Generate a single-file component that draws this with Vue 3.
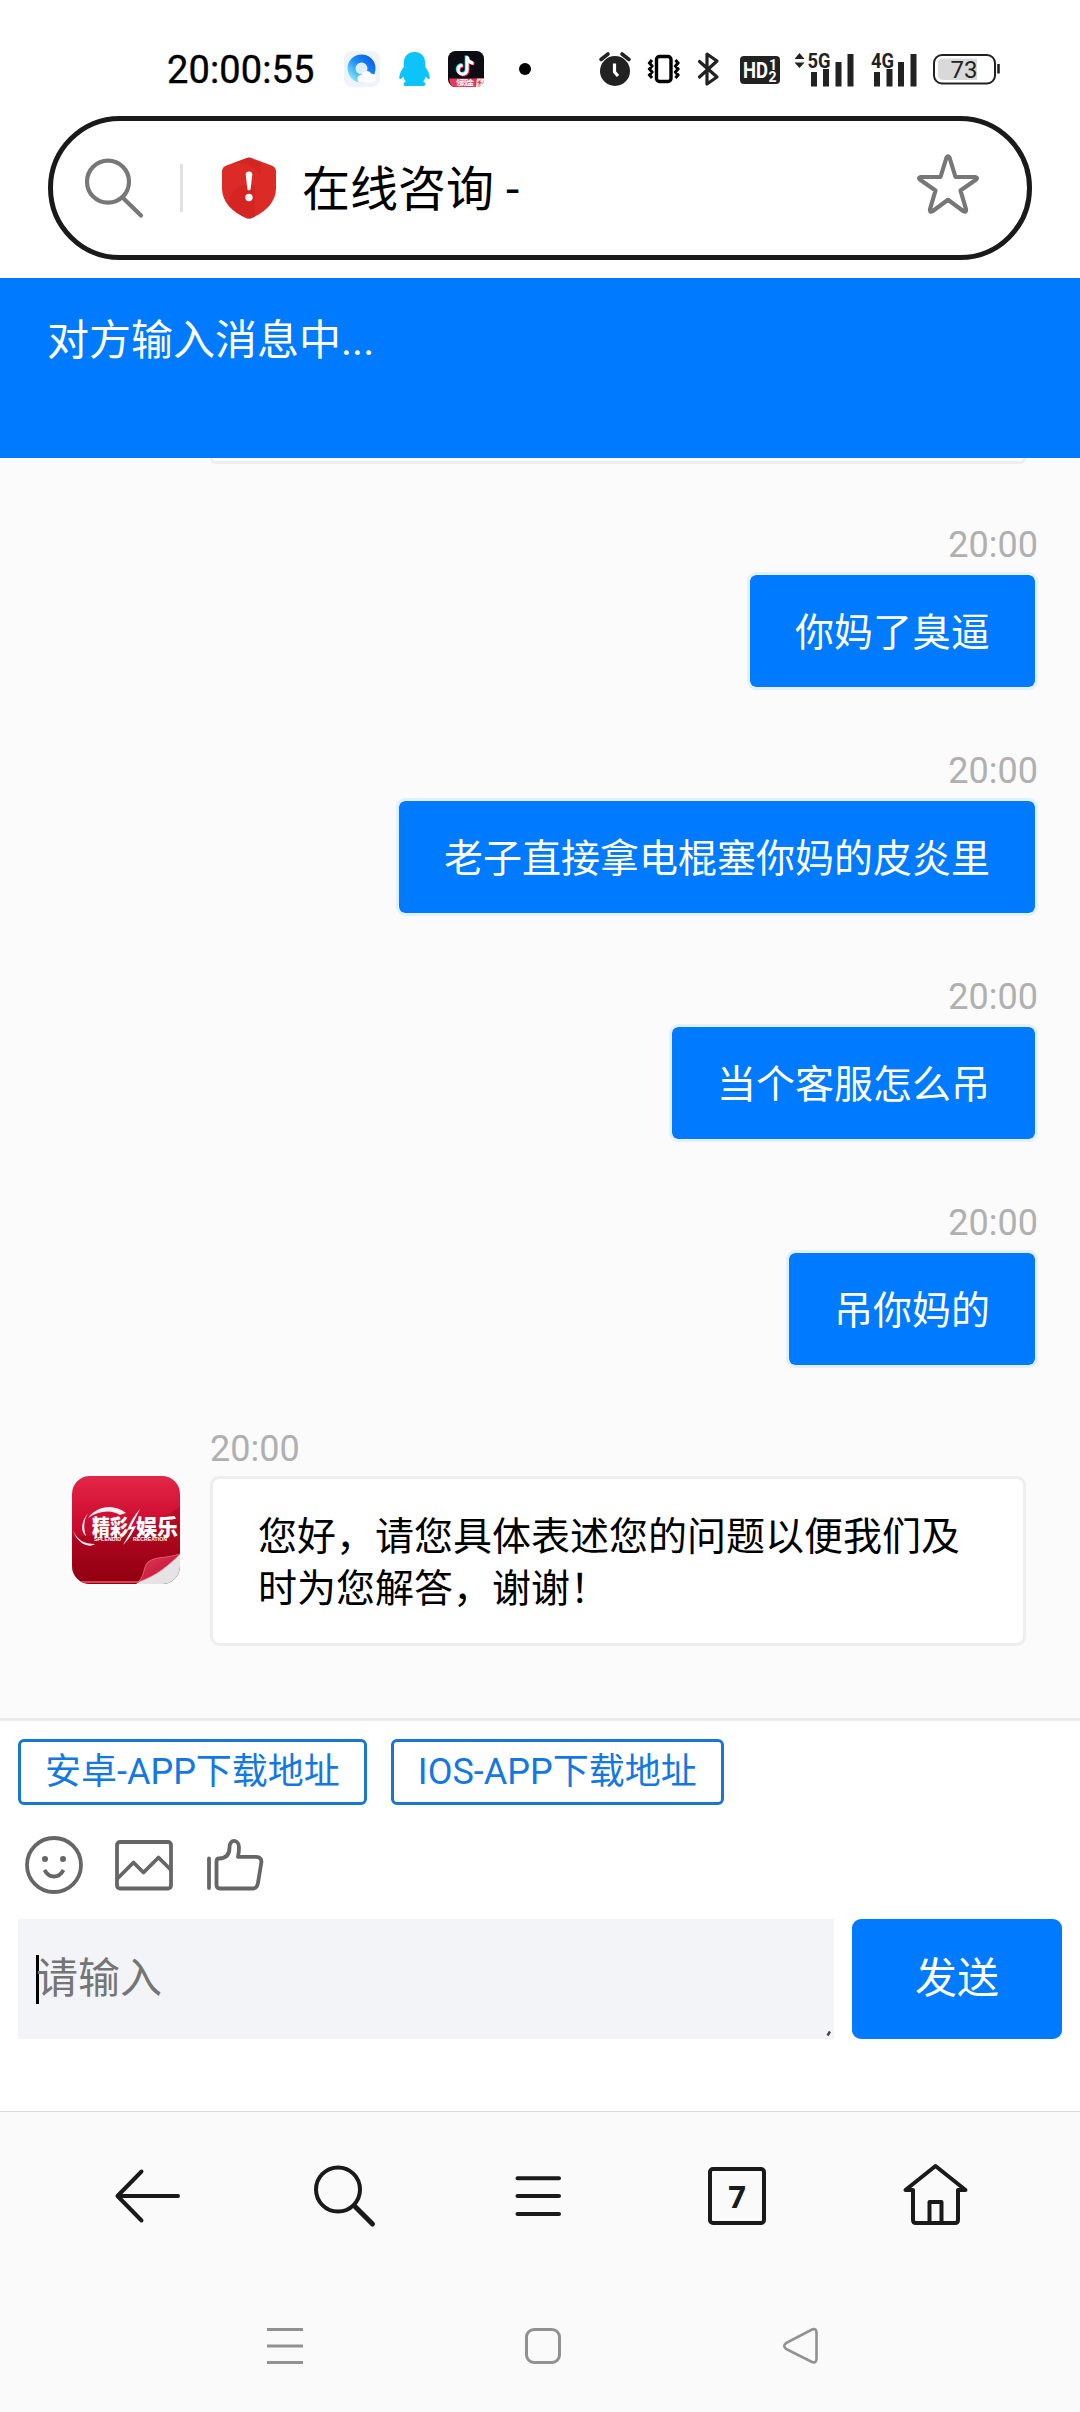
<script setup>
const sent = [
  { time: '20:00', text: '你妈了臭逼' },
  { time: '20:00', text: '老子直接拿电棍塞你妈的皮炎里' },
  { time: '20:00', text: '当个客服怎么吊' },
  { time: '20:00', text: '吊你妈的' },
]
const links = ['安卓-APP下载地址', 'IOS-APP下载地址']
</script>

<template>
  <div class="screen">
    <header class="status">
      <span class="clock">20:00:55</span>
      <svg class="qqb" width="36" height="36" viewBox="0 0 36 36">
        <defs>
          <linearGradient id="ring" x1="1" y1="0" x2="0" y2="1">
            <stop offset="0" stop-color="#0a5fe8" /><stop offset=".5" stop-color="#1f90f5" /><stop offset="1" stop-color="#7fe6ff" />
          </linearGradient>
        </defs>
        <rect width="36" height="36" rx="8" fill="#eff3fa" />
        <circle cx="17.500" cy="17.500" r="10" fill="#dfeefc" stroke="url(#ring)" stroke-width="8" />
        <path d="M17 31.500a3.800 3.800 0 0 1 .5-7.600 5.500 5.500 0 0 1 10-1.200 4.600 4.600 0 0 1 1.500 8.800z" fill="#fff" />
      </svg>
      <svg class="penguin" width="31" height="34" viewBox="0 0 31 34">
        <path d="M15.500 0C8.500 0 4.500 4.800 4.800 12v3C2 18.500 0 23 .3 26.500c.8 1.500 2.400 0 4-2 .5 2 1.300 3.600 2.600 5-3.200 1.500-2.800 4.300-.4 4.500h18c2.400-.2 2.800-3-.4-4.500 1.300-1.400 2.100-3 2.600-5 1.600 2 3.200 3.500 4 2 .3-3.500-1.700-8-4.500-11.500v-3C26.500 4.800 22.500 0 15.500 0z" fill="#0cc4fa" />
      </svg>
      <svg class="tok" width="36" height="36" viewBox="0 0 36 36">
        <defs><clipPath id="tile"><rect width="36" height="36" rx="7.500" /></clipPath></defs>
        <g clip-path="url(#tile)">
          <rect width="36" height="36" fill="#0d0b14" />
          <g fill="none" stroke-width="3">
            <path d="M18.200 4.500v13.500a4.500 4.500 0 1 1-4.500-4.500M18.200 5c.5 4 3 6 6.300 6.500" stroke="#25e8e2" />
            <path d="M20 6v13.500a4.500 4.500 0 1 1-4.500-4.500M20 6.500c.5 4 3 6 6.300 6.500" stroke="#fb3060" />
            <path d="M19.100 5.200v13.500a4.500 4.500 0 1 1-4.500-4.500M19.100 5.700c.5 4 3 6 6.300 6.500" stroke="#fff" />
          </g>
          <path d="M1 27.500h35V36H3z" fill="#e9385c" />
          <path d="M29 27.500h7V36h-8z" fill="#ffe9dc" />
          <path d="M33 28l-4 4h2l-1 3 4-4h-2z" fill="#e9385c" />
          <text x="8" y="34.200" class="tok-tag" textLength="18">领现金</text>
        </g>
      </svg>
      <i class="dot"></i>
      <svg class="alarm" width="34" height="36" viewBox="598 51 34 36">
        <circle cx="615" cy="71" r="15" fill="#222" />
        <path d="M601 59.500l7-5.500M629 59.500l-7-5.500" stroke="#222" stroke-width="3.600" stroke-linecap="round" />
        <path d="M614.500 63.500v8.500l3.500 4" stroke="#fff" stroke-width="3.200" fill="none" />
      </svg>
      <svg class="vib" width="32" height="30" viewBox="648 54 32 30">
        <rect x="656.500" y="56.500" width="14.500" height="25" rx="3" fill="none" stroke="#000" stroke-width="3.400" />
        <path d="M652 60l-2.500 3 2.500 3-2.500 3 2.500 3-2.500 3 2.500 3M675.500 60l2.500 3-2.500 3 2.500 3-2.500 3 2.500 3-2.500 3" fill="none" stroke="#000" stroke-width="3" />
      </svg>
      <svg class="bt" width="24" height="36" viewBox="697 51 24 36">
        <path d="M699.500 61.500l17.500 15.500-10 7V54l10 7-17.500 16" fill="none" stroke="#222" stroke-width="3.200" stroke-linecap="round" stroke-linejoin="round" />
      </svg>
      <svg class="hd" width="40" height="28" viewBox="740 56 40 28">
        <rect x="740" y="56" width="40" height="28" rx="4" fill="#222" />
        <text x="743" y="78" class="hd-main" textLength="25" lengthAdjust="spacingAndGlyphs">HD</text>
        <text x="769" y="69.500" class="hd-sub">1</text>
        <text x="768.500" y="82" class="hd-sub">2</text>
      </svg>
      <svg class="sig5" width="61" height="34" viewBox="794 51 61 34">
        <path d="M794.500 58l5-6 5 6zM794.500 61.500l5 5.500 5-5.500z" fill="#222" />
        <path d="M814 74v8.500M826 71v11.500M838.500 64v18.500M850.500 56v26.500" stroke="#222" stroke-width="6" stroke-linecap="square" />
        <text x="807.500" y="67" class="net" textLength="23" lengthAdjust="spacingAndGlyphs">5G</text>
      </svg>
      <svg class="sig4" width="48" height="34" viewBox="870 51 48 34">
        <path d="M877 74v8.500M889.500 71v11.500M901 64v18.500M913.500 56v26.500" stroke="#222" stroke-width="6" stroke-linecap="square" />
        <text x="871" y="67" class="net" textLength="23" lengthAdjust="spacingAndGlyphs">4G</text>
      </svg>
      <svg class="bat" width="68" height="32" viewBox="933 53 68 32">
        <rect x="934" y="55" width="61" height="28.500" rx="8" fill="#fff" stroke="#222" stroke-width="2" />
        <path d="M943 58.500h34v21.500h-34a5 5 0 0 1-5-5v-11.500a5 5 0 0 1 5-5z" fill="#d9d9d9" />
        <path d="M998.500 64v9.500" stroke="#222" stroke-width="2.600" />
        <text x="964" y="78" text-anchor="middle" class="bat-num">73</text>
      </svg>
    </header>

    <div class="address">
      <svg width="64" height="64" viewBox="82 156 64 64" class="mag">
        <circle cx="108" cy="181.700" r="21" /><path d="M122.500 197.500l18.500 18" />
      </svg>
      <i class="sep"></i>
      <svg class="shield" width="54" height="62" viewBox="222 157 54 62">
        <path d="M246.500 158q2.500-1 5 0l20 7.500q4.500 1.500 4.500 6v17c0 13-10 23.500-24 29.500q-3 1-6 0c-14-6-24-16.500-24-29.500v-17q0-4.500 4.500-6z" fill="#dc2b27" />
        <path d="M245 185c-9 1-15 8-17 18 5 7 11 11.500 18 15q3 1 6 0l3-1.300V185zM249 157.500l-16 6c12-2 22 4 28 12v-12z" fill="#cc1f1f" opacity=".5" />
        <path d="M245.700 174.500q0-3 3.300-3t3.300 3l-1.600 14q-.2 2-1.700 2t-1.700-2z" fill="#fff" />
        <circle cx="249" cy="197.500" r="3.700" fill="#fff" />
      </svg>
      <span class="page-title">在线咨询 -</span>
      <svg class="star" width="64" height="62" viewBox="916 153 64 62">
        <path d="M946.500 157.500q1.500-2.500 3 0l6 19.500h19.500q3.200 .7 1.200 2.600L960.500 190.500l5.600 19q0 3-2.600 1.700L948 199.800l-15.500 11.400q-2.600 1.300-2.600-1.700l5.600-19-15.700-10.900q-2-1.900 1.200-2.600h19.500z" />
      </svg>
    </div>

    <div class="peer">对方输入消息中...</div>

    <main class="chat">
      <div class="prev"></div>
      <div v-for="(m, i) in sent" :key="i" class="msg out">
        <time>{{ m.time }}</time>
        <div class="bubble">{{ m.text }}</div>
      </div>
      <div class="row-in">
        <svg class="avatar" width="108" height="108" viewBox="0 0 108 108">
          <defs>
            <linearGradient id="red" x1="0" y1="0" x2="0" y2="1">
              <stop offset="0" stop-color="#e22748" /><stop offset=".4" stop-color="#cf0d30" /><stop offset="1" stop-color="#92000f" />
            </linearGradient>
            <linearGradient id="fold" x1="0" y1="0" x2="1" y2="1">
              <stop offset="0" stop-color="#e8375a" /><stop offset="1" stop-color="#b3102e" />
            </linearGradient>
            <clipPath id="sq"><rect width="108" height="108" rx="18" /></clipPath>
          </defs>
          <g clip-path="url(#sq)">
            <rect width="108" height="108" fill="url(#red)" />
            <path d="M0 60C50 62 85 50 108 30V108H0z" fill="#8a0010" opacity=".3" />
            <path d="M108 78L64 108h44z" fill="#e4e4e4" />
            <path d="M108 78C92 83 84 80 76 86c-5 5-3 14-10 20 18-6 30-16 42-28z" fill="url(#fold)" stroke="#ee7088" stroke-width=".8" />
            <path d="M0 106h66" stroke="#d64058" stroke-width="2" />
            <path d="M16 42C26 29 42 28 54 37l-6 2C40 34 28 34 16 42zM16 37C8 47 9 57 14 60c-3-9-2-16 2-23zM1 54c4 10 11 14 22 14C16 73 4 66 1 54z" fill="#ffeef0" />
            <path d="M68 33C60 42 57 50 55 54l5-1-9 16c7-7 10-13 13-19l-5 1z" fill="#fff" />
            <text x="20" y="59" class="logo" textLength="36" lengthAdjust="spacingAndGlyphs">精彩</text>
            <text x="64" y="59" class="logo" textLength="42" lengthAdjust="spacingAndGlyphs">娱乐</text>
            <text x="22" y="65" class="logo-sub" textLength="27" lengthAdjust="spacingAndGlyphs">SPLENDID</text>
            <text x="61" y="65" class="logo-sub" textLength="34" lengthAdjust="spacingAndGlyphs">RECREATION</text>
          </g>
        </svg>
        <div class="msg in">
          <time>20:00</time>
          <div class="card">您好，请您具体表述您的问题以便我们及时为您解答，谢谢！</div>
        </div>
      </div>
    </main>

    <section class="composer">
      <div class="links">
        <a v-for="l in links" :key="l">{{ l }}</a>
      </div>
      <div class="tools">
        <svg width="60" height="60" viewBox="24 1835 60 60">
          <circle cx="54" cy="1865" r="27" />
          <circle cx="45" cy="1859" r="3" class="fill" /><circle cx="63" cy="1859" r="3" class="fill" />
          <path d="M44.500 1870q3.500 6.500 9.500 6.500t9.500-6.500" />
        </svg>
        <svg width="60" height="60" viewBox="114 1835 60 60">
          <rect x="117" y="1842" width="54" height="46.500" rx="3" />
          <path d="M117 1879l16.500-16.500 10 10 15-15 12.500 12.500" />
        </svg>
        <svg width="60" height="60" viewBox="204 1835 60 60">
          <path d="M209 1858.500v29.500" stroke-linecap="round" />
          <path d="M219 1858.500c7 0 10.500-4 10.500-11 0-9 9.500-8.500 9.500 0q0 4-1 9.300h18c4 0 5.800 2.500 5.300 6l-3.300 20c-.6 4-2 5.700-5 5.700h-33q-3.500 0-3.500-3.500v-23q0-3.500 2.500-3.500z" />
        </svg>
      </div>
      <div class="entry">
        <div class="field">
          <i class="caret"></i><span>请输入</span>
          <svg width="6" height="7" viewBox="0 0 6 7"><path d="M1.500 5.500l2.500-4" stroke="#444" stroke-width="2.400" /></svg>
        </div>
        <button>发送</button>
      </div>
    </section>

    <nav class="browser-nav">
      <svg width="70" height="70" viewBox="113 2161 70 70"><path d="M141.500 2171.500l-24 24.500 24 24.500M118 2196h60" /></svg>
      <svg width="70" height="70" viewBox="310 2161 70 70"><circle cx="338" cy="2189.500" r="22" /><path d="M355 2206.500l17.500 17.500" stroke-width="5" /></svg>
      <svg width="70" height="70" viewBox="507 2161 70 70"><path d="M517.500 2178.300h41.500M517.500 2196h41.500M517.500 2213.900h41.500" /></svg>
      <svg width="70" height="70" viewBox="704 2161 70 70"><rect x="710" y="2169" width="54" height="54" rx="3" /><text x="737" y="2207.500" text-anchor="middle">7</text></svg>
      <svg width="70" height="70" viewBox="901 2161 70 70">
        <path d="M935.500 2166l-30 24h7.500v30q0 3 3 3h39q3 0 3-3v-30h7.500zM929.500 2222v-20h12v20" />
      </svg>
    </nav>
    <footer class="sys-nav">
      <svg width="40" height="40" viewBox="265 2326 40 40"><path d="M267 2329.500h36M267 2346h36M267 2362.500h36" /></svg>
      <svg width="40" height="40" viewBox="523 2326 40 40"><rect x="526.500" y="2329.500" width="33" height="33" rx="7.500" /></svg>
      <svg width="40" height="40" viewBox="781 2326 40 40"><path d="M812 2329.500q4.500-1.500 4.500 3v26.500q0 4.500-4.500 3l-26-13.200q-3.500-2.800 0-5.600z" stroke-width="2.600" /></svg>
    </footer>
  </div>
</template>

<style>
body { margin: 0; }
</style>

<style scoped>
.screen {
  width: 1080px; height: 2412px; overflow: hidden; background: #fff;
  display: flex; flex-direction: column;
  font-family: Roboto, "Noto Sans CJK SC", sans-serif;
}
svg { display: block; flex: none; overflow: visible; }
.status { height: 116px; flex: none; display: flex; align-items: center; padding: 22px 0 0 167px; box-sizing: border-box; color: #000; }
.clock { font: 400 38px/44px Roboto, sans-serif; width: 177px; -webkit-text-stroke: .4px #000; letter-spacing: .1px; padding-top: 2px; }
.penguin { margin-left: 19px; }
.tok { margin-left: 18px; }
.dot { width: 12px; height: 12px; border-radius: 50%; background: #000; margin-left: 35px; }
.alarm { margin-left: 67px; }
.vib { margin-left: 16px; }
.bt { margin-left: 17px; }
.hd { margin-left: 19px; margin-top: 2px; }
.sig5 { margin-left: 14px; }
.sig4 { margin-left: 15px; }
.bat { margin-left: 15px; }
.tok-tag { font: 700 7px "Noto Sans CJK SC", sans-serif; fill: #fff; }
.hd-main { font: 700 22px Roboto, sans-serif; fill: #fff; }
.hd-sub { font: 700 14px Roboto, sans-serif; fill: #fff; }
.net { font: 700 20px Roboto, sans-serif; fill: #222; stroke: #fff; stroke-width: 2px; paint-order: stroke; }
.bat-num { font: 400 24px Roboto, sans-serif; fill: #222; }

.address {
  height: 144px; margin: 0 48px 18px; flex: none; box-sizing: border-box; display: flex; align-items: center;
  border: 5px solid #1a1a1a; border-radius: 72px; padding-left: 29px;
}
.mag { fill: none; stroke: #777; stroke-width: 4.200; stroke-linecap: round; }
.sep { width: 3px; height: 48px; background: #e1e1e1; margin: 0 39px 0 34px; }
.page-title { font-size: 48px; line-height: 60px; margin-left: 26px; padding-top: 4px; color: #000; flex: 1; white-space: pre; }
.star { margin-right: 47px; margin-bottom: 8px; fill: none; stroke: #777; stroke-width: 4.200; stroke-linejoin: round; }

.peer { height: 180px; flex: none; box-sizing: border-box; background: #007aff; color: #fff; font-size: 42px; line-height: 60px; padding: 33px 47px 0; }

.chat { height: 1260px; flex: none; background: #fbfbfb; border-bottom: 3px solid #ebebeb; color: #000; }
.prev { height: 6px; box-sizing: border-box; margin: 0 54px 60px 210px; background: #fff; border: 3px solid #eee; border-top: 0; border-radius: 0 0 9px 9px; }
.msg { display: flex; flex-direction: column; }
time { font-size: 36px; line-height: 42px; color: #b0b0b0; margin-bottom: 6px; }
.out { align-items: flex-end; padding-right: 42px; margin-bottom: 60px; }
.bubble, .card { font-size: 39px; line-height: 52px; padding: 32px 45px 28px; border: 3px solid #e2f1fd; border-radius: 9px; }
.bubble { background: #007aff; background-clip: padding-box; color: #fff; }
.card { width: 720px; background: #fff; border-color: #eee; }
.row-in { display: flex; align-items: flex-start; padding-left: 72px; gap: 30px; }
.avatar { margin-top: 48px; }
.logo { font: 900 22px "Noto Sans CJK SC", sans-serif; fill: #fff; }
.logo-sub { font: 700 5.500px "Liberation Sans", sans-serif; fill: #fff; }

.composer { height: 390px; flex: none; box-sizing: border-box; padding: 18px 18px 0; }
.links { display: flex; gap: 24px; }
.links a { border: 3px solid #1976d2; border-radius: 6px; padding: 1px 24px 0; font-size: 36px; line-height: 59px; color: #1478e4; }
.tools { display: flex; gap: 30px; padding: 30px 6px 24px; }
.tools svg { fill: none; stroke: #666; stroke-width: 3.800; stroke-linejoin: round; }
.tools .fill { fill: #666; stroke: none; }
.entry { display: flex; gap: 18px; }
.field { width: 816px; height: 120px; box-sizing: border-box; background: #f2f4f8; display: flex; align-items: center; padding-left: 18px; color: #757575; font-size: 42px; line-height: 50px; }
.field span { flex: 1; margin-left: -3px; }
.field svg { align-self: flex-end; margin: 0 2px 2px 0; }
.caret { width: 3px; height: 49px; background: #000; }
button { width: 210px; height: 120px; border: 0; border-radius: 9px; padding: 0; background: #007aff; color: #fff; font: 42px/60px Roboto, "Noto Sans CJK SC", sans-serif; }

.browser-nav { height: 169px; flex: none; box-sizing: border-box; background: #fafafa; border-top: 1px solid #d9d9d9; display: flex; justify-content: space-between; align-items: center; padding: 0 109px 0 113px; }
.browser-nav svg { fill: none; stroke: #1a1a1a; stroke-width: 4; stroke-linecap: round; stroke-linejoin: round; }
.browser-nav text { font: 700 31px "Noto Sans", sans-serif; fill: #1a1a1a; stroke: none; }
.sys-nav { flex: 1; background: #fafafa; display: flex; gap: 218px; padding: 46px 0 0 265px; }
.sys-nav svg { fill: none; stroke: #919191; stroke-width: 3; }
</style>
